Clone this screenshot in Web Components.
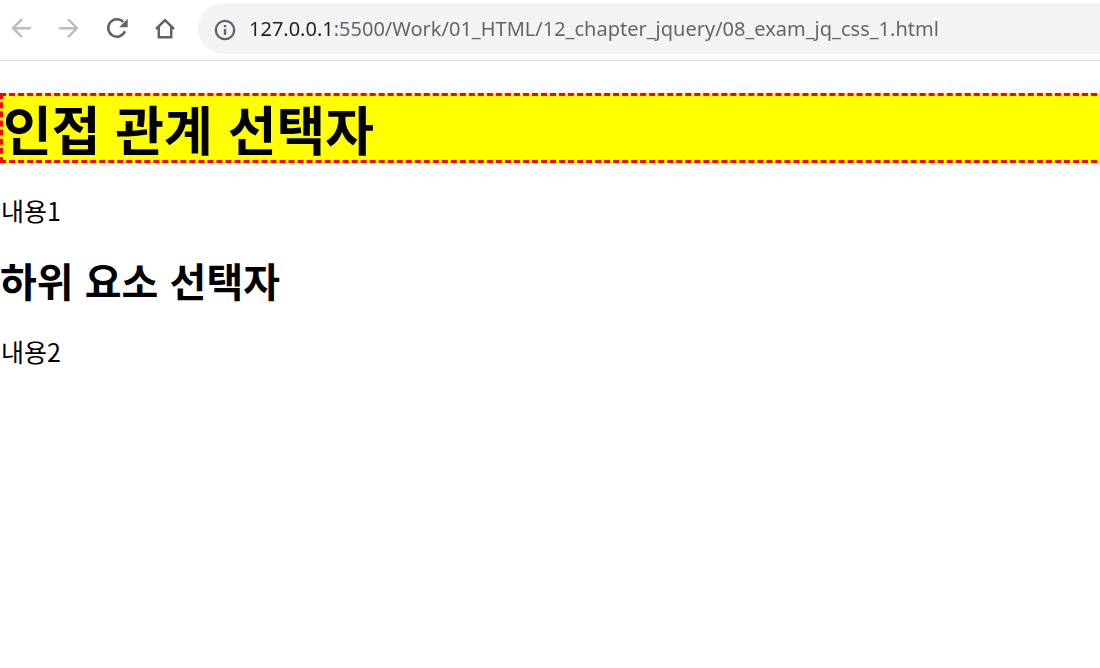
<!DOCTYPE html>
<html lang="ko">
<head>
<meta charset="utf-8">
<title>08_exam_jq_css_1</title>
<style>
  body { margin: 0; background: #fff; }
</style>
</head>
<body>
<browser-window>
  <browser-toolbar slot="toolbar">
    <nav-button icon="back" label="뒤로" disabled></nav-button>
    <nav-button icon="forward" label="앞으로" disabled></nav-button>
    <nav-button icon="reload" label="새로고침"></nav-button>
    <nav-button icon="home" label="홈"></nav-button>
    <address-bar slot="address" value="127.0.0.1:5500/Work/01_HTML/12_chapter_jquery/08_exam_jq_css_1.html"></address-bar>
  </browser-toolbar>
  <page-title>인접 관계 선택자</page-title>
  <page-text>내용1</page-text>
  <page-subtitle>하위 요소 선택자</page-subtitle>
  <page-text>내용2</page-text>
</browser-window>
<script>
  const define = (name, html, init) => {
    const template = document.createElement('template');
    template.innerHTML = html;
    customElements.define(name, class extends HTMLElement {
      constructor() {
        super();
        this.attachShadow({ mode: 'open' }).append(template.content.cloneNode(true));
      }
      connectedCallback() { if (init) init(this, this.shadowRoot); }
    });
  };

  define('browser-window', `
    <style>
      :host { display: block; overflow: hidden; color: #000;
              font-family: "Noto Sans CJK KR", "Noto Sans", sans-serif; }
      main { padding-top: 32px; }
    </style>
    <slot name="toolbar"></slot>
    <main><slot></slot></main>`);

  define('browser-toolbar', `
    <style>
      :host { display: flex; align-items: center; box-sizing: border-box; height: 61px;
              padding: 3px 0 6px; border-bottom: 1px solid #dadce0; background: #fff; }
      nav { display: flex; padding-right: 9px; margin-left: -3px; }
      ::slotted(address-bar) { flex: 1; }
    </style>
    <nav><slot></slot></nav>
    <slot name="address"></slot>`);

  const icons = {
    back: '<path d="M30 19.2H12.500M21 10.200L12 19.200L21 28.200" fill="none" stroke="currentColor" stroke-width="2.400"/>',
    forward: '<path d="M10 19.200H27.500M19 10.200L28 19.200L19 28.200" fill="none" stroke="currentColor" stroke-width="2.400"/>',
    reload: '<path d="M26.300 13A8.700 8.700 0 1 0 28 22.300" fill="none" stroke="currentColor" stroke-width="2.500"/><path d="M30.700 9.700V18.200H22.200Z" fill="currentColor"/>',
    home: '<path d="M11 20L20 11.200L29 20M13.800 18V28.200H26.200V18" fill="none" stroke="currentColor" stroke-width="2.500"/>'
  };
  define('nav-button', `
    <style>
      :host { display: block; }
      button { display: block; width: 48px; height: 51px; padding: 0 4px; border: 0;
               background: none; color: #5f6368; }
      button:disabled { color: #babcbe; }
      svg { display: block; width: 40px; height: 40px; }
    </style>
    <button type="button"><svg viewBox="0 0 40 40" aria-hidden="true"></svg></button>`,
    (host, root) => {
      const button = root.querySelector('button');
      button.setAttribute('aria-label', host.getAttribute('label'));
      button.disabled = host.hasAttribute('disabled');
      root.querySelector('svg').innerHTML = icons[host.getAttribute('icon')];
    });

  define('address-bar', `
    <style>
      :host { display: block; min-width: 0; }
      label { display: flex; align-items: center; gap: 12px; height: 51px; box-sizing: border-box;
              padding-left: 15px; border-radius: 26px 0 0 26px; background: #f1f3f4; }
      svg { flex: none; width: 24px; height: 24px; color: #5f6368; }
      /* The host part of the address is dark, the rest is grey. */
      input { flex: 1; min-width: 0; height: 40px; padding: 0; border: 0; outline: 0;
              font: 20px "Noto Sans", sans-serif;
              background: linear-gradient(to right, #202124 84px, #5f6368 84px);
              -webkit-background-clip: text; background-clip: text;
              -webkit-text-fill-color: transparent; }
    </style>
    <label>
      <svg viewBox="0 0 24 24" aria-hidden="true">
        <circle cx="12" cy="13" r="9.200" fill="none" stroke="currentColor" stroke-width="2.300"/>
        <path d="M10.800 8H13.200V10.300H10.800ZM10.800 12H13.200V18H10.800Z" fill="currentColor"/>
      </svg>
      <input type="text" aria-label="주소" spellcheck="false">
    </label>`,
    (host, root) => { root.querySelector('input').value = host.getAttribute('value'); });

  define('page-title', `
    <style>
      :host { display: block; margin-right: -6px; }
      h1 { margin: 0; border: 3px dashed #f00; background: #ff0;
           font-size: 53px; line-height: 64px; font-weight: 700; }
    </style>
    <h1><slot></slot></h1>`);

  define('page-subtitle', `
    <style>
      :host { display: block; }
      h2 { margin: 0; font-size: 40px; line-height: 48px; font-weight: 700; }
    </style>
    <h2><slot></slot></h2>`);

  define('page-text', `
    <style>
      :host { display: block; }
      p { margin: 31px 0 30px; padding-left: 1px; font-size: 25px; line-height: 32px; }
    </style>
    <p><slot></slot></p>`);
</script>
</body>
</html>
